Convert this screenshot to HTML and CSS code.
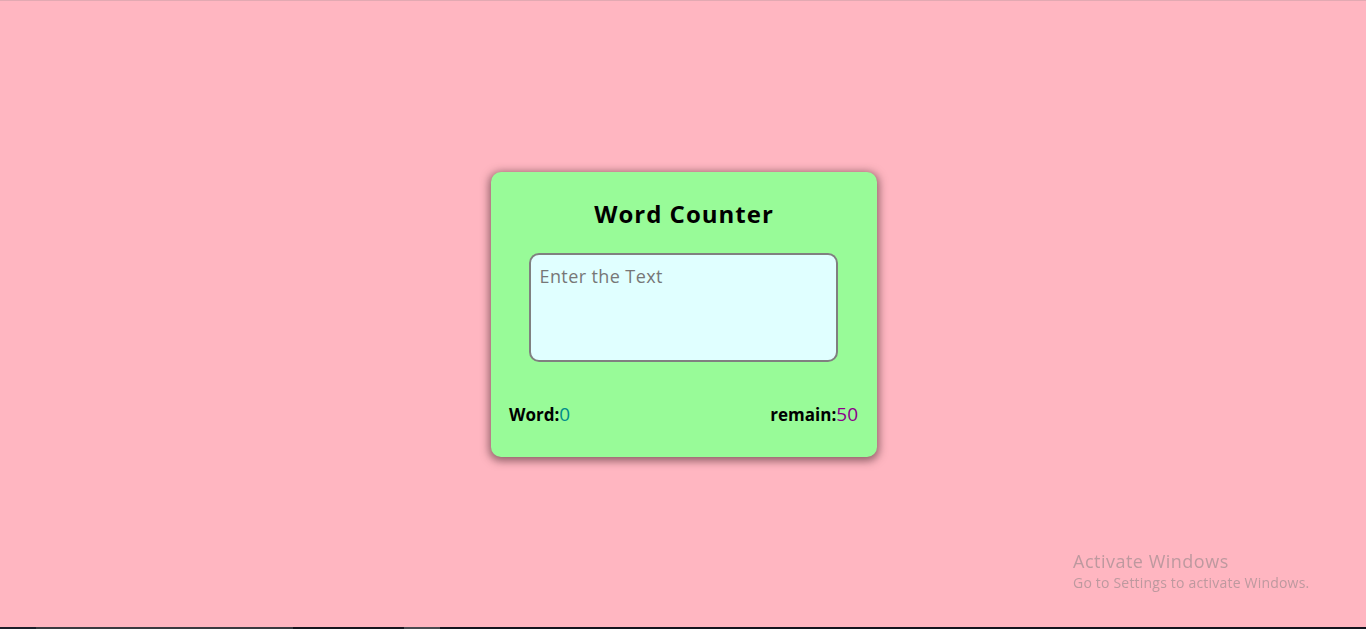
FILE: index.html
```html
<!DOCTYPE html>
<html lang="en">
<head>
<meta charset="utf-8">
<title>Word Counter</title>
<link rel="stylesheet" href="styles.css">
</head>
<body>
<div class="topline"></div>
<main class="page">
  <section class="card">
    <h2 class="title">Word Counter</h2>
    <textarea class="input" placeholder="Enter the Text"></textarea>
    <div class="stats">
      <span class="stat">Word:<span class="count">0</span></span>
      <span class="stat">remain:<span class="remain">50</span></span>
    </div>
  </section>
</main>
<div class="watermark">
  <div class="wm-title">Activate Windows</div>
  <div class="wm-sub">Go to Settings to activate Windows.</div>
</div>
<div class="taskbar">
  <span class="seg seg-a"></span>
  <span class="seg seg-b"></span>
  <span class="seg seg-c"></span>
  <span class="seg seg-d"></span>
  <span class="seg seg-e"></span>
</div>
</body>
</html>
```
FILE: styles.css
```css
* { box-sizing: border-box; }
html, body { margin: 0; height: 100%; }
body {
  background: #ffb6c1;
  font-family: "Comic Sans MS", "Open Sans", sans-serif;
  overflow: hidden;
}
.topline {
  position: fixed; top: 0; left: 0; right: 0; height: 1px;
  background: #e2a9b2;
}
.page {
  height: 100%;
  display: flex;
  align-items: center;
  justify-content: center;
  padding-left: 2px;
}
.card {
  width: 386px;
  height: 285px;
  background: #98fb98;
  border-radius: 10px;
  box-shadow: 0 2px 9px 2px rgba(70, 40, 45, 0.6);
  display: flex;
  flex-direction: column;
  align-items: center;
  padding: 0 18px;
}
.title {
  margin: 26px 0 0;
  font-size: 24px;
  font-weight: 700;
  line-height: 32px;
  letter-spacing: 1px;
  color: #000;
}
.input {
  margin-top: 23px;
  margin-right: 2px;
  width: 309px;
  height: 109px;
  border: 2px solid #808080;
  border-radius: 10px;
  background: #e0ffff;
  resize: none;
  padding: 9px 9px;
  font-family: "Comic Sans MS", "Open Sans", sans-serif;
  font-size: 18px;
  letter-spacing: 0.4px;
  line-height: 24px;
  outline: none;
}
.input::placeholder { color: #777; }
.stats {
  margin-top: 40px;
  width: 100%;
  display: flex;
  justify-content: space-between;
  align-items: baseline;
  padding: 0 1px 0 0;
}
.stat {
  font-size: 17px;
  font-weight: 700;
  line-height: 24px;
  color: #000;
}
.count, .remain { font-size: 19px; font-weight: 500; }
.count { color: #008b8b; }
.remain { color: #8b008b; }
.watermark {
  position: fixed;
  left: 1073px;
  top: 549px;
  color: rgba(135, 130, 132, 0.55);
  font-family: "Open Sans", "Noto Sans", sans-serif;
}
.wm-title { font-size: 18px; line-height: 24px; letter-spacing: 0.5px; }
.wm-sub { font-size: 14px; line-height: 20px; letter-spacing: 0.2px; }
.taskbar {
  position: fixed; left: 0; right: 0; bottom: 0; height: 2px;
  display: flex; background: #14141e;
}
.seg { height: 2px; }
.seg-a { width: 36px; background: #1c1f2a; }
.seg-b { width: 257px; background: #3a3a40; }
.seg-c { width: 111px; background: #16161e; }
.seg-d { width: 36px; background: #4a4a50; }
.seg-e { flex: 1; background: #14141e; }
```
